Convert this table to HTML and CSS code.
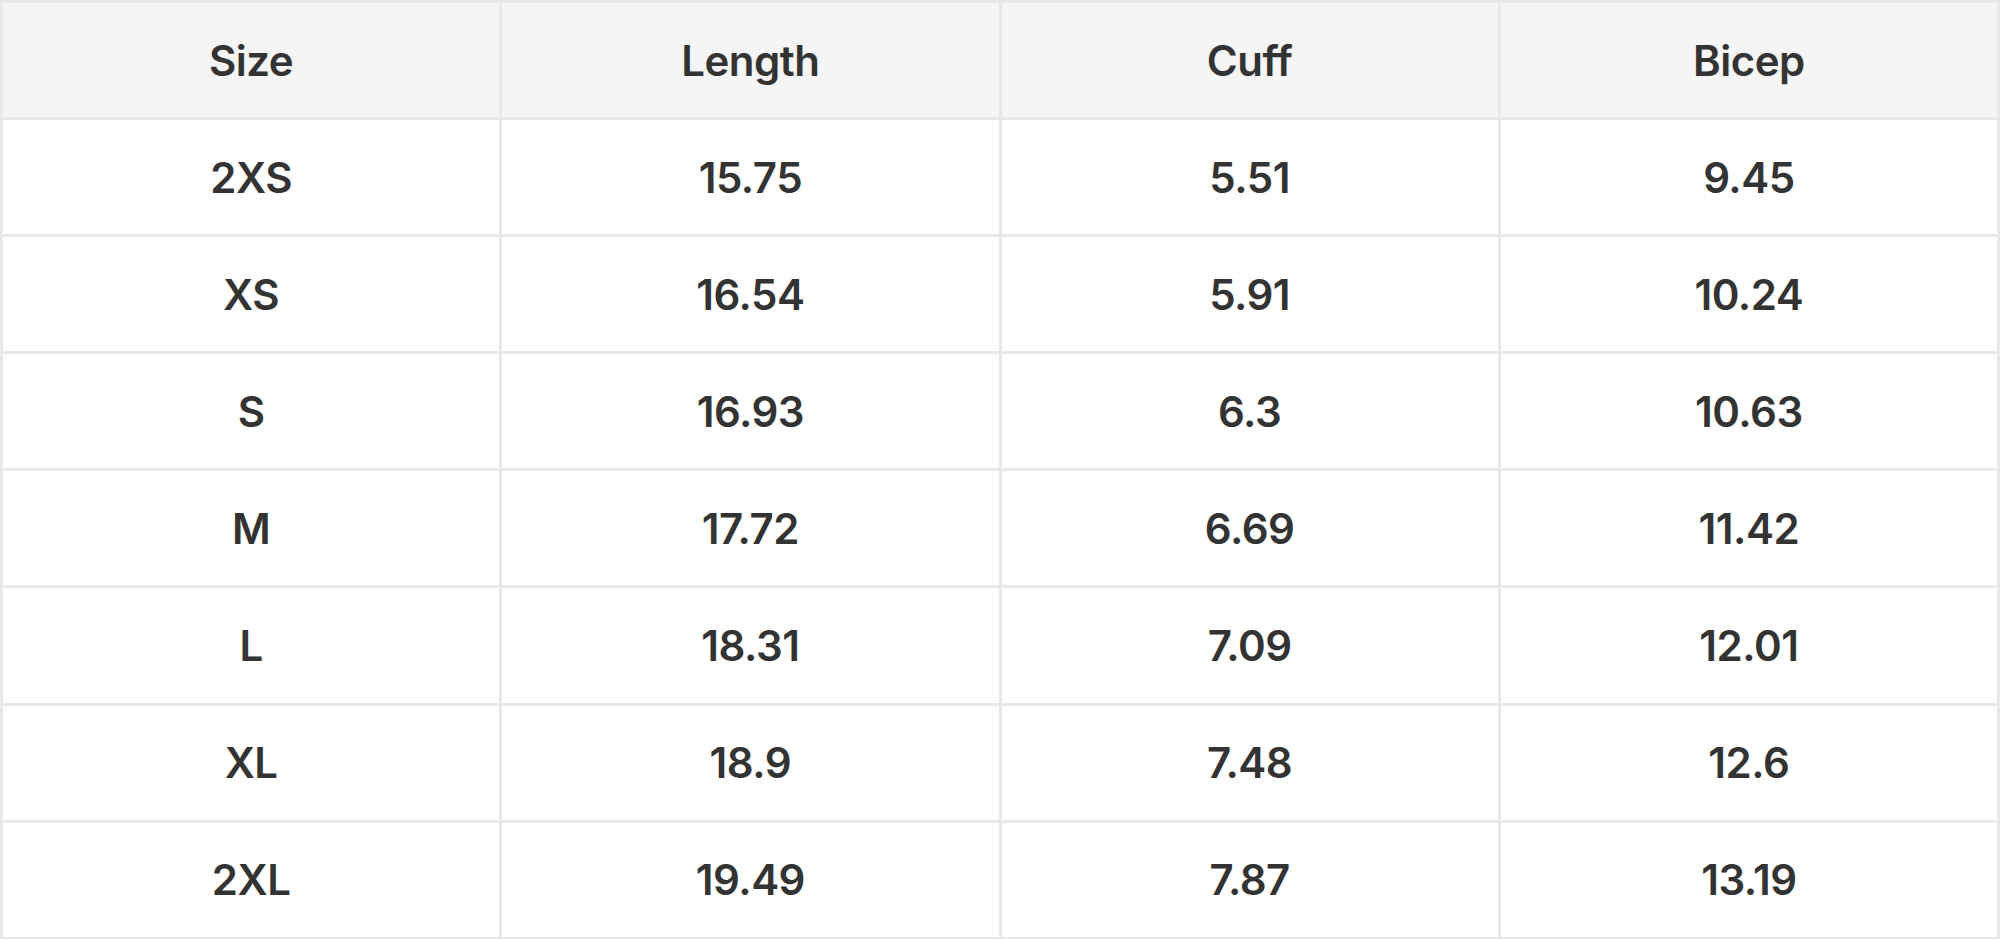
FILE: index.html
```html
<!DOCTYPE html>
<html lang="en">
<head>
<meta charset="utf-8">
<title>Size chart</title>
<link rel="stylesheet" href="styles.css">
</head>
<body>
<table class="size-table">
  <thead>
    <tr><th>Size</th><th>Length</th><th>Cuff</th><th>Bicep</th></tr>
  </thead>
  <tbody>
    <tr><td>2XS</td><td>15.75</td><td>5.51</td><td>9.45</td></tr>
    <tr><td>XS</td><td>16.54</td><td>5.91</td><td>10.24</td></tr>
    <tr><td>S</td><td>16.93</td><td>6.3</td><td>10.63</td></tr>
    <tr><td>M</td><td>17.72</td><td>6.69</td><td>11.42</td></tr>
    <tr><td>L</td><td>18.31</td><td>7.09</td><td>12.01</td></tr>
    <tr><td>XL</td><td>18.9</td><td>7.48</td><td>12.6</td></tr>
    <tr><td>2XL</td><td>19.49</td><td>7.87</td><td>13.19</td></tr>
  </tbody>
</table>
</body>
</html>
```
FILE: styles.css
```css
html, body {
  margin: 0;
  padding: 0;
  background: #ffffff;
}
.size-table {
  width: 2000px;
  border-collapse: collapse;
  table-layout: fixed;
  font-family: Inter, "Noto Sans", sans-serif;
  font-size: 42px;
  font-weight: 560;
  letter-spacing: -0.5px;
  color: #333333;
}
.size-table th,
.size-table td {
  height: 114.1px;
  border: 3px solid #e8e8e8;
  text-align: center;
  vertical-align: middle;
  padding: 0;
}
.size-table th {
  background: #f5f5f5;
  font-weight: 560;
}
```
